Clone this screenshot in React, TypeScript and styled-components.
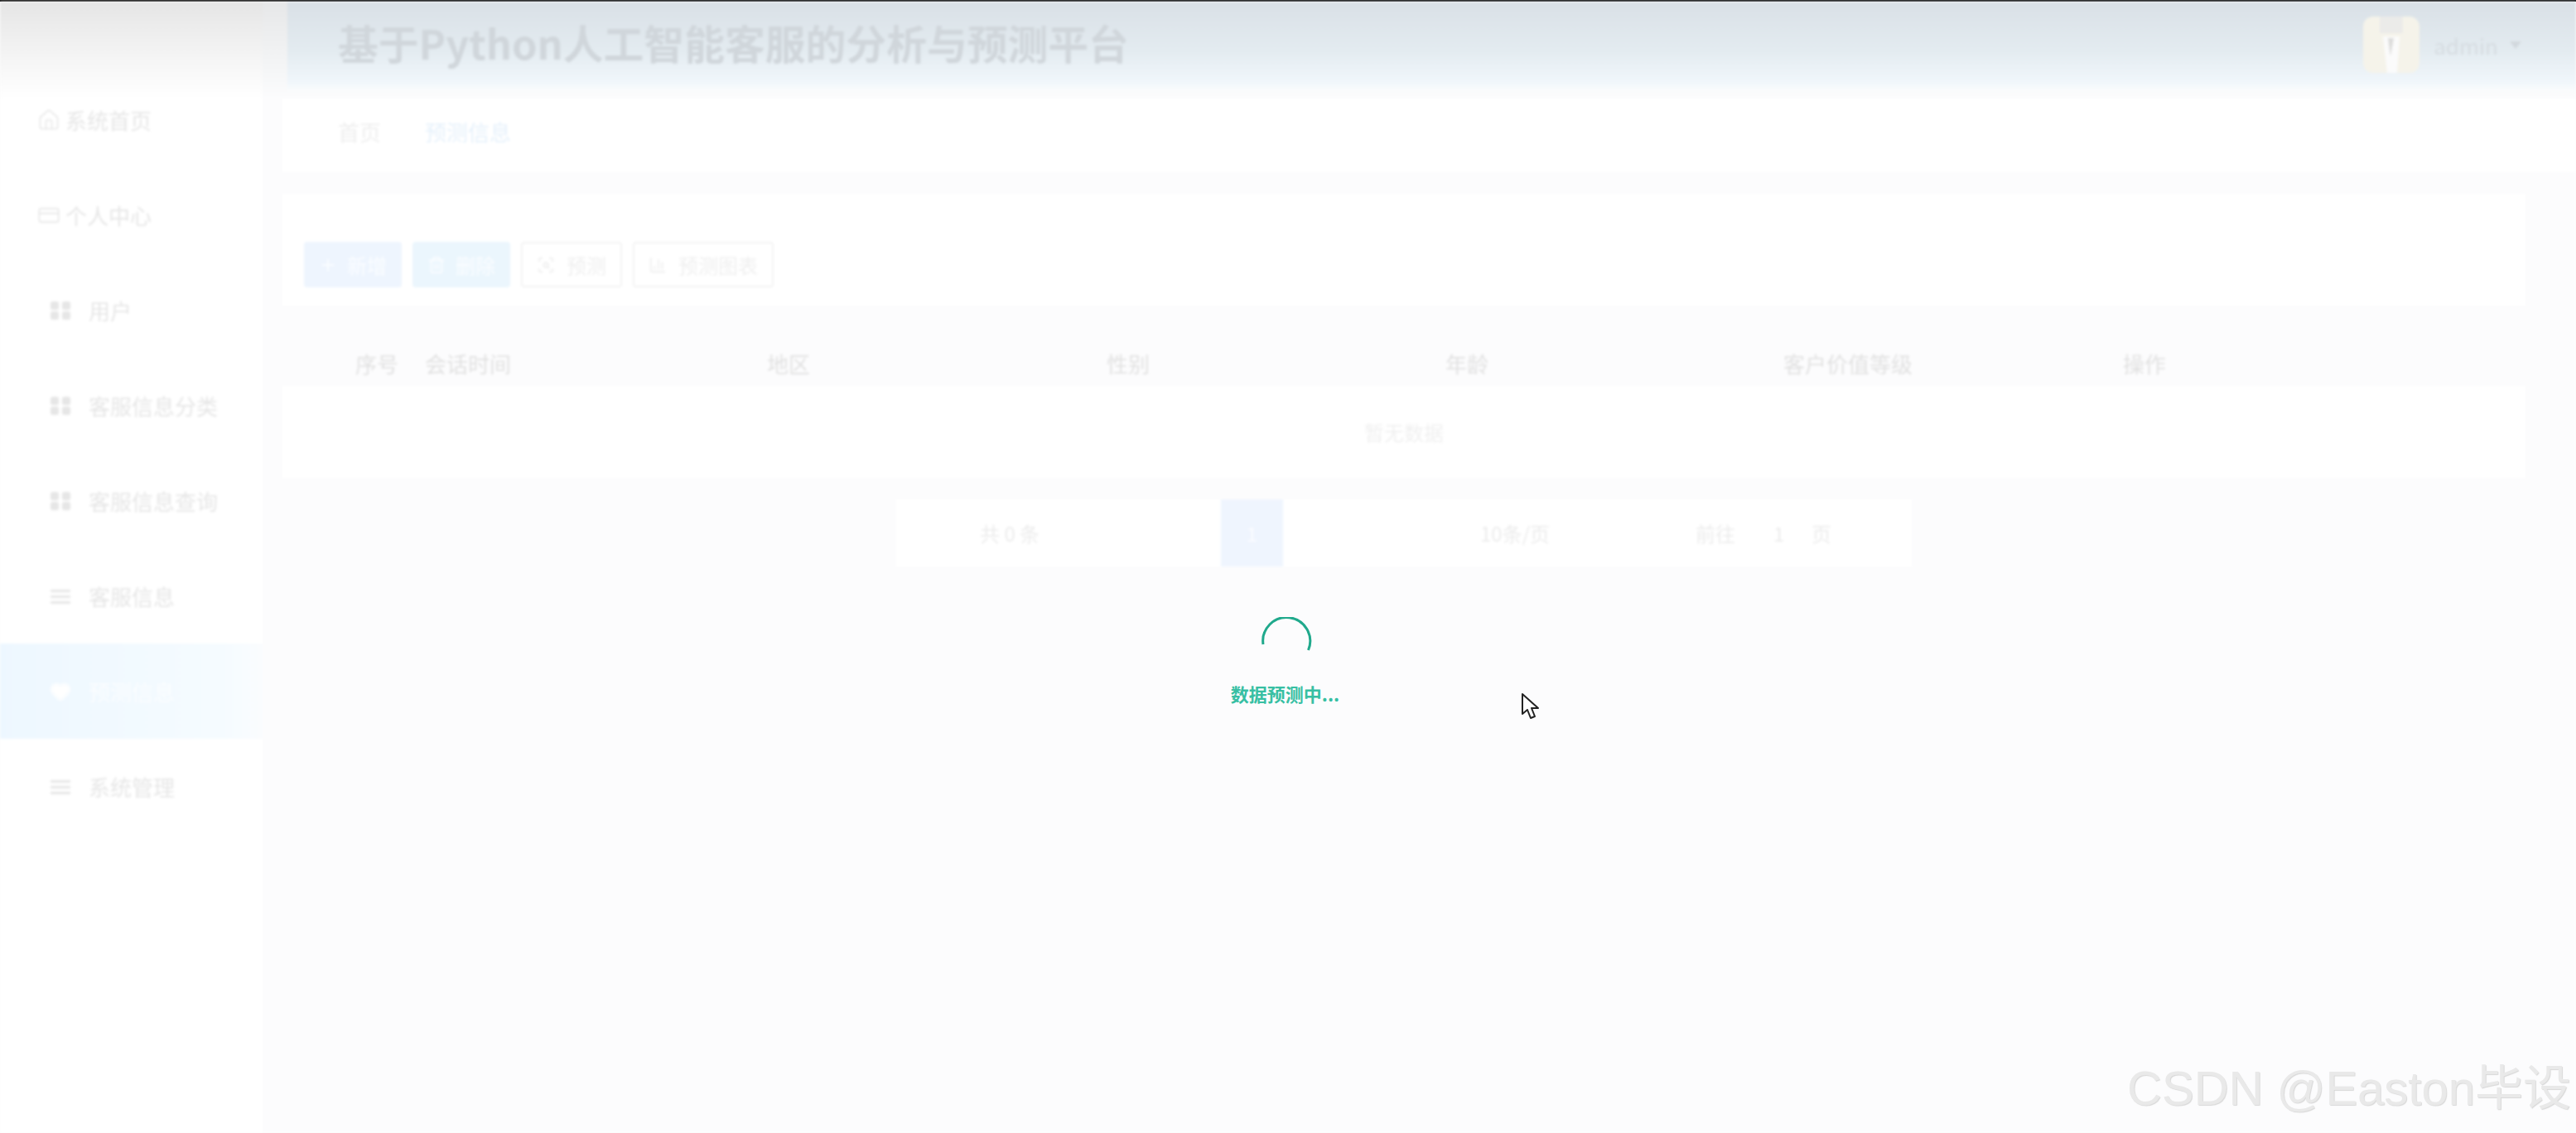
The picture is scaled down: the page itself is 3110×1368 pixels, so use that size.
import React from 'react';
import styled, { createGlobalStyle } from 'styled-components';
import { Plus, Trash2, ScanSearch, ChartColumn, Home, CreditCard, Heart } from 'lucide-react';

const GlobalStyle = createGlobalStyle`
    html, body { margin: 0; padding: 0; height: 100%; background: #fcfcfd; }
    body { font-family: "Noto Sans CJK SC", "Noto Sans", sans-serif; overflow: hidden; }
    #root { height: 100%; }
    * { box-sizing: border-box; }
`;

const menu = [
    { label: '系统首页', icon: 'home', top: true },
    { label: '个人中心', icon: 'card', top: true },
    { label: '用户', icon: 'grid' },
    { label: '客服信息分类', icon: 'grid' },
    { label: '客服信息查询', icon: 'grid' },
    { label: '客服信息', icon: 'list' },
    { label: '预测信息', icon: 'heart', active: true },
    { label: '系统管理', icon: 'list' },
];

const columns = ['会话时间', '地区', '性别', '年龄', '客户价值等级', '操作'];

const MenuIcon = ({ name }: { name: string }) => {
    if (name === 'home') return <Home size={28} strokeWidth={1.4} />;
    if (name === 'card') return <CreditCard size={28} strokeWidth={1.4} />;
    if (name === 'heart') return <Heart size={26} strokeWidth={3} fill="#fff" />;
    if (name === 'grid') {
        return (
            <svg width="26" height="24" viewBox="0 0 26 24" fill="currentColor" aria-hidden="true">
                <rect x="1" y="1" width="10" height="10" rx="2.500" />
                <rect x="15" y="1" width="10" height="10" rx="2.500" />
                <rect x="1" y="13" width="10" height="10" rx="2.500" />
                <rect x="15" y="13" width="10" height="10" rx="2.500" />
            </svg>
        );
    }
    return (
        <svg width="26" height="24" viewBox="0 0 26 24" fill="currentColor" aria-hidden="true">
            <rect x="1" y="4" width="24" height="3" />
            <rect x="1" y="11" width="24" height="3" />
            <rect x="1" y="18" width="24" height="3" />
        </svg>
    );
};

export default function App() {
    return (
        <>
            <GlobalStyle />
            <Screen>
                <TopStrip />
                <Blurred>
                    <Sidebar>
                        {menu.map((item) => (
                            <MenuItem key={item.label} $top={item.top} $active={item.active}>
                                <MenuIcon name={item.icon} />
                                <span>{item.label}</span>
                            </MenuItem>
                        ))}
                    </Sidebar>
                    <Main>
                        <Header>
                            <Title>基于Python人工智能客服的分析与预测平台</Title>
                            <UserBox>
                                <Avatar viewBox="0 0 68 68" aria-hidden="true">
                                    <rect width="68" height="68" fill="#f5f3ea" />
                                    <rect x="20" width="28" height="20" fill="#ebebe9" />
                                    <path d="M24 24h20l-3 44H29z" fill="#fbfbfb" />
                                    <path d="M30 26l3 22 4-22z" fill="#dcdcdb" />
                                </Avatar>
                                <UserName>admin</UserName>
                                <Caret />
                            </UserBox>
                        </Header>
                        <TabsBar>
                            <Tab>首页</Tab>
                            <Tab $active>预测信息</Tab>
                        </TabsBar>
                        <Toolbar>
                            <ActionButton $fill="#eef5fe">
                                <Plus size={22} />
                                新增
                            </ActionButton>
                            <ActionButton $fill="#ebf6fd">
                                <Trash2 size={22} />
                                删除
                            </ActionButton>
                            <ActionButton>
                                <ScanSearch size={22} />
                                预测
                            </ActionButton>
                            <ActionButton>
                                <ChartColumn size={22} />
                                预测图表
                            </ActionButton>
                        </Toolbar>
                        <Table>
                            <HeadRow>
                                <IndexCell>序号</IndexCell>
                                {columns.map((c) => (
                                    <HeadCell key={c}>{c}</HeadCell>
                                ))}
                            </HeadRow>
                            <EmptyRow>暂无数据</EmptyRow>
                        </Table>
                        <PagerWrap>
                            <Pager>
                                <Total>共 0 条</Total>
                                <PageButton>1</PageButton>
                                <PageSize>10条/页</PageSize>
                                <Jump>前往</Jump>
                                <JumpValue>1</JumpValue>
                                <span>页</span>
                            </Pager>
                        </PagerWrap>
                    </Main>
                </Blurred>

                <LoadingMask>
                    <svg width="64" height="50" viewBox="0 0 64 50" aria-hidden="true">
                        <path d="M5 33A28.5 28.5 0 1 1 59.500 40" fill="none" stroke="#20a98c" strokeWidth="3" />
                    </svg>
                    <LoadingText>数据预测中...</LoadingText>
                </LoadingMask>

                <Pointer width="24" height="34" viewBox="0 0 24 34" aria-hidden="true">
                    <path
                        d="M2 2v24l6-5 4 10 5-2-4-10h8z"
                        fill="#fff"
                        stroke="#222"
                        strokeWidth="2"
                        strokeLinejoin="round"
                    />
                </Pointer>
                <Watermark>CSDN @Easton毕设</Watermark>
            </Screen>
        </>
    );
}

const Screen = styled.div`
    position: relative;
    width: 3110px;
    height: 1368px;
    overflow: hidden;
    display: flex;
    flex-direction: column;
    background: #fcfcfd;
`;

const TopStrip = styled.div`
    height: 2px;
    flex: none;
    background: #111;
`;

const Blurred = styled.div`
    flex: 1;
    display: flex;
    min-height: 0;
    filter: blur(1.4px);
`;

const Sidebar = styled.aside`
    width: 317px;
    flex: none;
    padding-top: 85px;
    background: linear-gradient(#e5e5e5, #f5f5f5 70px, #fff 118px);
`;

const MenuItem = styled.div<{ $top?: boolean; $active?: boolean }>`
    height: 115px;
    display: flex;
    align-items: center;
    gap: ${({ $top }) => ($top ? '6px' : '21px')};
    padding-left: ${({ $top }) => ($top ? '45px' : '60px')};
    font-size: 26px;
    color: ${({ $active }) => ($active ? '#fbfdff' : '#e6e6e6')};
    background: ${({ $active }) => ($active ? 'linear-gradient(90deg, #edf7ff, #f5fbff 85%, #fafcfe)' : 'transparent')};
`;

const Main = styled.main`
    flex: 1;
    min-width: 0;
    display: flex;
    flex-direction: column;
    background: linear-gradient(#e6e7e8, #f6f7f8 90px, #fcfcfd 118px);
`;

const Header = styled.header`
    height: 108px;
    flex: none;
    margin-left: 30px;
    padding: 0 66px 12px 61px;
    display: flex;
    align-items: center;
    justify-content: space-between;
    background: linear-gradient(#d9e0e6, #e3ebf0 55%, #f0f6fb 90%, #fafcfd);
`;

const Title = styled.h1`
    margin: 0;
    font-size: 48.800px;
    font-weight: 700;
    color: #d0d6db;
    white-space: nowrap;
`;

const UserBox = styled.div`
    display: flex;
    align-items: center;
    margin-top: 8px;
`;

const Avatar = styled.svg`
    width: 68px;
    height: 68px;
    margin-right: 17px;
    border-radius: 12px;
`;

const UserName = styled.span`
    font-size: 26px;
    color: #d6dce1;
`;

const Caret = styled.i`
    margin-left: 14px;
    border-left: 7px solid transparent;
    border-right: 7px solid transparent;
    border-top: 9px solid #d2d8dd;
`;

const TabsBar = styled.nav`
    height: 89px;
    flex: none;
    margin: 9px 0 0 24px;
    padding: 0 0 10px 67px;
    display: flex;
    align-items: center;
    gap: 53px;
    background: #fff;
`;

const Tab = styled.span<{ $active?: boolean }>`
    font-size: 26px;
    color: ${({ $active }) => ($active ? '#e6f1fb' : '#eeeeee')};
`;

const Toolbar = styled.section`
    height: 135px;
    flex: none;
    margin: 26px 61px 0 24px;
    padding: 58px 0 0 26px;
    display: flex;
    align-items: flex-start;
    gap: 13px;
    background: #fff;
`;

const ActionButton = styled.button<{ $fill?: string }>`
    height: 55px;
    padding: 0 ${({ $fill }) => ($fill ? '16px' : '17px')};
    display: flex;
    align-items: center;
    gap: ${({ $fill }) => ($fill ? '12px' : '14px')};
    font: inherit;
    font-size: 24px;
    color: ${({ $fill }) => ($fill ? '#fbfdff' : '#efefef')};
    background: ${({ $fill }) => $fill || '#fff'};
    border: 2px solid ${({ $fill }) => $fill || '#f3f3f3'};
    border-radius: 4px;
`;

const Table = styled.section`
    flex: none;
    margin: 45px 61px 0 24px;
`;

const HeadRow = styled.div`
    height: 52px;
    padding-bottom: 4px;
    display: grid;
    grid-template-columns: 156px 413px 410px 409px 408px 410px 1fr;
    align-items: center;
    font-size: 26px;
    color: #e1e1e1;
`;

const HeadCell = styled.div`
    padding-left: 16px;
    white-space: nowrap;
`;

const IndexCell = styled.div`
    padding-right: 16px;
    text-align: right;
`;

const EmptyRow = styled.div`
    height: 111px;
    display: flex;
    align-items: center;
    justify-content: center;
    background: #fff;
    font-size: 24px;
    color: #f0f0f0;
`;

const PagerWrap = styled.div`
    margin: 26px 61px 0 24px;
    display: flex;
    justify-content: center;
`;

const Pager = styled.div`
    width: 1226px;
    height: 81px;
    padding-left: 101px;
    display: flex;
    align-items: center;
    background: #fff;
    font-size: 24px;
    color: #ececec;
`;

const Total = styled.span`
    width: 291px;
`;

const PageButton = styled.span`
    width: 75px;
    height: 81px;
    display: flex;
    align-items: center;
    justify-content: center;
    background: #eff5fe;
    color: #fbfcff;
`;

const PageSize = styled.span`
    margin-left: 238px;
    width: 260px;
`;

const Jump = styled.span`
    width: 94px;
`;

const JumpValue = styled.span`
    width: 46px;
`;

const LoadingMask = styled.div`
    position: absolute;
    inset: 0;
    padding: 745px 7px 0 0;
    display: flex;
    flex-direction: column;
    align-items: center;
`;

const LoadingText = styled.p`
    margin: 26px 0 0;
    font-size: 22px;
    line-height: 32px;
    font-weight: 700;
    color: #37bfa3;
`;

const Pointer = styled.svg`
    position: absolute;
    left: 1836px;
    top: 836px;
`;

const Watermark = styled.div`
    position: absolute;
    right: 6px;
    top: 1275px;
    font-family: "Liberation Sans", "Noto Sans CJK SC", sans-serif;
    font-size: 58px;
    line-height: 78px;
    color: #e9e9e9;
    text-shadow: 1px 1px 1px #d8d8d8;
    white-space: nowrap;
`;
